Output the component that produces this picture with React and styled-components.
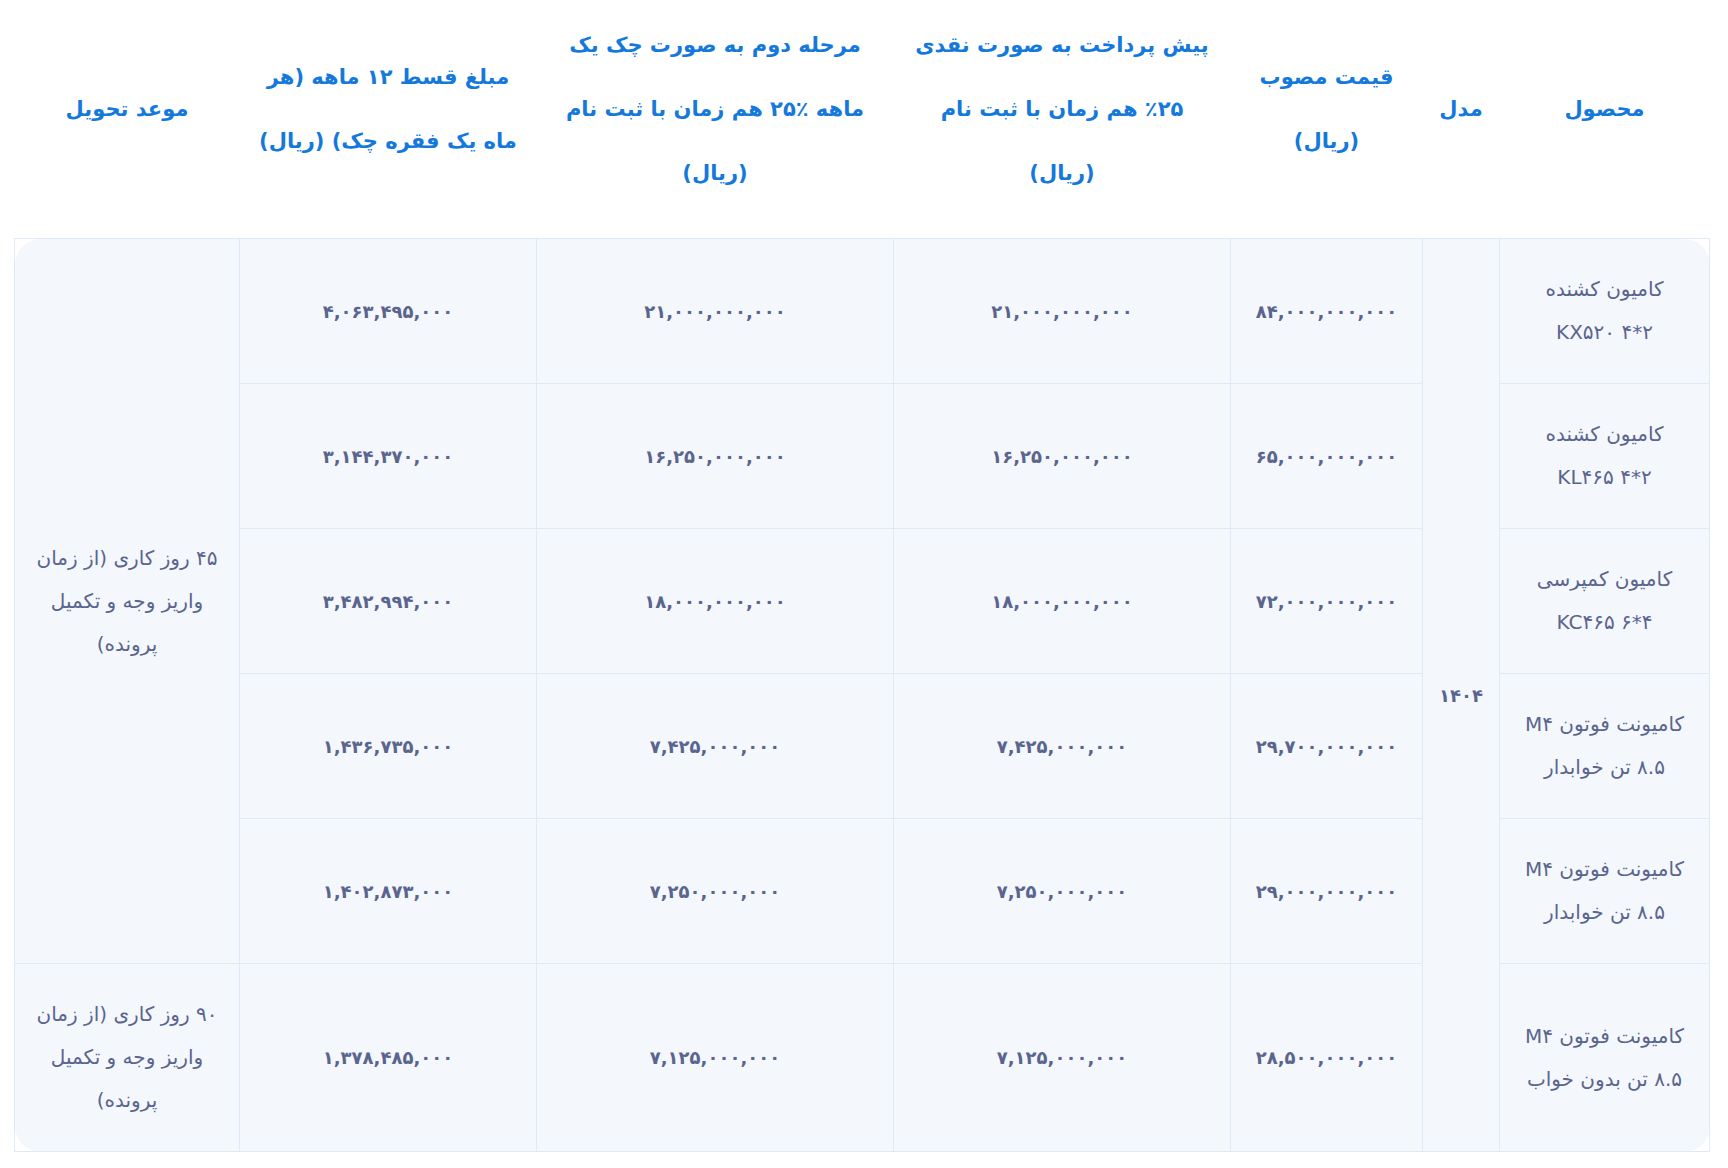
import React from 'react';
import styled, { createGlobalStyle } from 'styled-components';

const GlobalStyle = createGlobalStyle`
  html, body {
    margin: 0;
    padding: 0;
    background: #ffffff;
  }
  body {
    font-family: "DejaVu Sans", "Noto Sans", sans-serif;
  }
`;

const Page = styled.div`
  padding: 0 18px 0 15px;
  direction: rtl;
`;

const Table = styled.table`
  width: 100%;
  table-layout: fixed;
  border-collapse: collapse;
  direction: rtl;
`;

const HeadCell = styled.th`
  padding: 13px 8px 33px;
  vertical-align: middle;
  text-align: center;
  color: #1479db;
  font-size: 21px;
  font-weight: 700;
  line-height: 64px;
`;

const Line = styled.span`
  display: block;
  white-space: nowrap;
`;

const Cell = styled.td`
  padding: 29px 8px;
  vertical-align: middle;
  text-align: center;
  background: #f4f7fc;
  border: 1px solid #e0e9f6;
  color: #5a658e;
  font-size: ${(p) => (p.$num ? '18px' : '20px')};
  font-weight: ${(p) => (p.$num ? 700 : 400)};
  line-height: 43px;
  border-top-right-radius: ${(p) => (p.$tr ? '26px' : '0')};
  border-top-left-radius: ${(p) => (p.$tl ? '26px' : '0')};
  border-bottom-right-radius: ${(p) => (p.$br ? '26px' : '0')};
  border-bottom-left-radius: ${(p) => (p.$bl ? '26px' : '0')};
`;

const widths = [210, 77, 192, 337, 357, 297, 225];

const headers = [
  ['محصول'],
  ['مدل'],
  ['قیمت مصوب', '(ریال)'],
  ['پیش پرداخت به صورت نقدی', '٪۲۵ هم زمان با ثبت نام', '(ریال)'],
  ['مرحله دوم به صورت چک یک', 'ماهه ٪۲۵ هم زمان با ثبت نام', '(ریال)'],
  ['مبلغ قسط ۱۲ ماهه (هر', 'ماه یک فقره چک) (ریال)'],
  ['موعد تحویل'],
];

const rows = [
  {
    product: ['کامیون کشنده', 'KX۵۲۰ ۴*۲'],
    price: '۸۴,۰۰۰,۰۰۰,۰۰۰',
    cash: '۲۱,۰۰۰,۰۰۰,۰۰۰',
    check: '۲۱,۰۰۰,۰۰۰,۰۰۰',
    install: '۴,۰۶۳,۴۹۵,۰۰۰',
  },
  {
    product: ['کامیون کشنده', 'KL۴۶۵ ۴*۲'],
    price: '۶۵,۰۰۰,۰۰۰,۰۰۰',
    cash: '۱۶,۲۵۰,۰۰۰,۰۰۰',
    check: '۱۶,۲۵۰,۰۰۰,۰۰۰',
    install: '۳,۱۴۴,۳۷۰,۰۰۰',
  },
  {
    product: ['کامیون کمپرسی', 'KC۴۶۵ ۶*۴'],
    price: '۷۲,۰۰۰,۰۰۰,۰۰۰',
    cash: '۱۸,۰۰۰,۰۰۰,۰۰۰',
    check: '۱۸,۰۰۰,۰۰۰,۰۰۰',
    install: '۳,۴۸۲,۹۹۴,۰۰۰',
  },
  {
    product: ['کامیونت فوتون M۴', '۸.۵ تن خوابدار'],
    price: '۲۹,۷۰۰,۰۰۰,۰۰۰',
    cash: '۷,۴۲۵,۰۰۰,۰۰۰',
    check: '۷,۴۲۵,۰۰۰,۰۰۰',
    install: '۱,۴۳۶,۷۳۵,۰۰۰',
  },
  {
    product: ['کامیونت فوتون M۴', '۸.۵ تن خوابدار'],
    price: '۲۹,۰۰۰,۰۰۰,۰۰۰',
    cash: '۷,۲۵۰,۰۰۰,۰۰۰',
    check: '۷,۲۵۰,۰۰۰,۰۰۰',
    install: '۱,۴۰۲,۸۷۳,۰۰۰',
  },
  {
    product: ['کامیونت فوتون M۴', '۸.۵ تن بدون خواب'],
    price: '۲۸,۵۰۰,۰۰۰,۰۰۰',
    cash: '۷,۱۲۵,۰۰۰,۰۰۰',
    check: '۷,۱۲۵,۰۰۰,۰۰۰',
    install: '۱,۳۷۸,۴۸۵,۰۰۰',
  },
];

const delivery45 = ['۴۵ روز کاری (از زمان', 'واریز وجه و تکمیل', 'پرونده)'];
const delivery90 = ['۹۰ روز کاری (از زمان', 'واریز وجه و تکمیل', 'پرونده)'];

const lines = (list) => list.map((t) => <Line key={t}>{t}</Line>);

export default function App() {
  const last = rows.length - 1;
  return (
    <Page>
      <GlobalStyle />
      <Table>
        <colgroup>
          {widths.map((w, i) => (
            <col key={i} style={{ width: `${w}px` }} />
          ))}
        </colgroup>
        <thead>
          <tr>
            {headers.map((h, i) => (
              <HeadCell key={i}>{lines(h)}</HeadCell>
            ))}
          </tr>
        </thead>
        <tbody>
          {rows.map((r, i) => (
            <tr key={i}>
              <Cell $tr={i === 0} $br={i === last}>{lines(r.product)}</Cell>
              {i === 0 && (
                <Cell $num rowSpan={rows.length}>۱۴۰۴</Cell>
              )}
              <Cell $num>{r.price}</Cell>
              <Cell $num>{r.cash}</Cell>
              <Cell $num>{r.check}</Cell>
              <Cell $num>{r.install}</Cell>
              {i === 0 && (
                <Cell $tl rowSpan={5}>{lines(delivery45)}</Cell>
              )}
              {i === last && <Cell $bl>{lines(delivery90)}</Cell>}
            </tr>
          ))}
        </tbody>
      </Table>
    </Page>
  );
}
